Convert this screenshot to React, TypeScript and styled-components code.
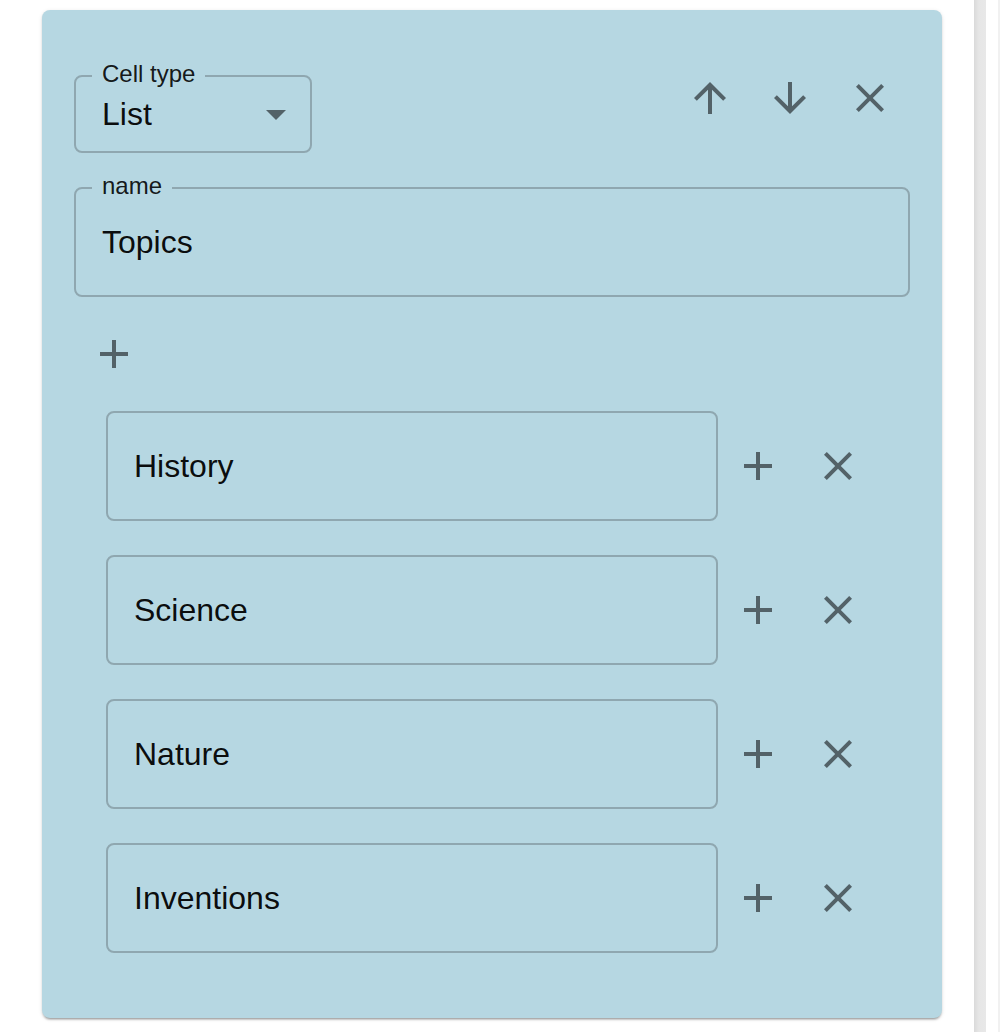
import React from "react";
import styled, { createGlobalStyle } from "styled-components";

const PANEL_BG = "#b6d7e2";
const ICON_COLOR = "#536268";
const OUTLINE_COLOR = "#8fa7b0";

const GlobalStyle = createGlobalStyle`
  html, body {
    margin: 0;
    padding: 0;
    background: #ffffff;
  }
  body {
    font-family: "Liberation Sans", Arial, Helvetica, sans-serif;
  }
`;

const Page = styled.div`
  display: flex;
  align-items: flex-start;
  height: 1032px;
  overflow: hidden;
`;

const Panel = styled.section`
  box-sizing: border-box;
  width: 900px;
  margin: 10px 0 0 42px;
  padding: 48px 32px 65px;
  background: ${PANEL_BG};
  border-radius: 8px;
  box-shadow: 0 3px 2px -2px rgba(0, 0, 0, 0.25), 0 2px 2px 0 rgba(0, 0, 0, 0.12),
    0 1px 4px 0 rgba(0, 0, 0, 0.1);
  display: flex;
  flex-direction: column;
`;

const Scrollbar = styled.div`
  align-self: stretch;
  width: 12px;
  margin-left: 32px;
  background: linear-gradient(to right, #dadada, #e6e6e6 40%, #e8e8e8);
`;

const ScrollEdge = styled.div`
  align-self: stretch;
  width: 2px;
  margin-left: 12px;
  background: #f1f1f1;
`;

const Header = styled.div`
  display: flex;
  justify-content: space-between;
  align-items: flex-start;
`;

const Actions = styled.div`
  display: flex;
`;

const IconButton = styled.button`
  width: 80px;
  height: 80px;
  flex: none;
  border: 0;
  padding: 0;
  margin: 0;
  background: transparent;
  border-radius: 50%;
  color: ${ICON_COLOR};
  display: flex;
  align-items: center;
  justify-content: center;
  cursor: pointer;
`;

const Outline = styled.div<{ $height: number; $width?: number; $grow?: boolean; $mt?: number }>`
  position: relative;
  box-sizing: border-box;
  display: flex;
  align-items: center;
  flex: ${(p) => (p.$grow ? "1 1 auto" : "none")};
  height: ${(p) => p.$height}px;
  ${(p) => (p.$width ? `width: ${p.$width}px;` : "")}
  margin-top: ${(p) => p.$mt ?? 0}px;
  padding: 0 10px 0 26px;
  border: 2px solid ${OUTLINE_COLOR};
  border-radius: 8px;
  font-size: 32px;
  color: rgba(0, 0, 0, 0.94);
`;

const FloatingLabel = styled.span`
  position: absolute;
  top: -15px;
  left: 16px;
  padding: 0 10px;
  background: ${PANEL_BG};
  font-size: 24px;
  line-height: 24px;
  color: rgba(0, 0, 0, 0.9);
  white-space: nowrap;
`;

const Value = styled.span`
  flex: 1;
  line-height: 38px;
  white-space: nowrap;
`;

const DropIcon = styled.span`
  display: flex;
  color: ${ICON_COLOR};
`;

const AddRow = styled.div`
  display: flex;
  margin-top: 17px;
`;

const ItemList = styled.div`
  display: flex;
  flex-direction: column;
  gap: 34px;
  margin-top: 17px;
  padding: 0 32px;
`;

const ItemRow = styled.div`
  display: flex;
  align-items: center;
`;

type IconProps = { d: string; size?: number };

const Icon = ({ d, size = 48 }: IconProps) => (
  <svg width={size} height={size} viewBox="0 0 24 24" fill="currentColor" aria-hidden="true">
    <path d={d} />
  </svg>
);

const ARROW_UP = "M4 12l1.41 1.41L11 7.83V20h2V7.83l5.58 5.59L20 12l-8-8-8 8z";
const ARROW_DOWN = "M20 12l-1.41-1.41L13 16.17V4h-2v12.17l-5.58-5.59L4 12l8 8 8-8z";
const CLOSE =
  "M19 6.41L17.59 5 12 10.59 6.41 5 5 6.41 10.59 12 5 17.59 6.41 19 12 13.41 17.59 19 19 17.59 13.41 12z";
const ADD = "M19 13h-6v6h-2v-6H5v-2h6V5h2v6h6v2z";
const DROP = "M7 10l5 5 5-5z";

const items = ["History", "Science", "Nature", "Inventions"];

export default function App() {
  return (
    <>
      <GlobalStyle />
      <Page>
        <Panel>
          <Header>
            <Outline $height={78} $width={238} $mt={17}>
              <FloatingLabel>Cell type</FloatingLabel>
              <Value>List</Value>
              <DropIcon>
                <Icon d={DROP} />
              </DropIcon>
            </Outline>
            <Actions>
              <IconButton aria-label="Move up">
                <Icon d={ARROW_UP} />
              </IconButton>
              <IconButton aria-label="Move down">
                <Icon d={ARROW_DOWN} />
              </IconButton>
              <IconButton aria-label="Remove cell">
                <Icon d={CLOSE} />
              </IconButton>
            </Actions>
          </Header>

          <Outline $height={110} $mt={34}>
            <FloatingLabel>name</FloatingLabel>
            <Value>Topics</Value>
          </Outline>

          <AddRow>
            <IconButton aria-label="Add item">
              <Icon d={ADD} />
            </IconButton>
          </AddRow>

          <ItemList>
            {items.map((item) => (
              <ItemRow key={item}>
                <Outline $height={110} $grow>
                  <Value>{item}</Value>
                </Outline>
                <IconButton aria-label={`Add after ${item}`}>
                  <Icon d={ADD} />
                </IconButton>
                <IconButton aria-label={`Remove ${item}`}>
                  <Icon d={CLOSE} />
                </IconButton>
              </ItemRow>
            ))}
          </ItemList>
        </Panel>
        <Scrollbar />
        <ScrollEdge />
      </Page>
    </>
  );
}
